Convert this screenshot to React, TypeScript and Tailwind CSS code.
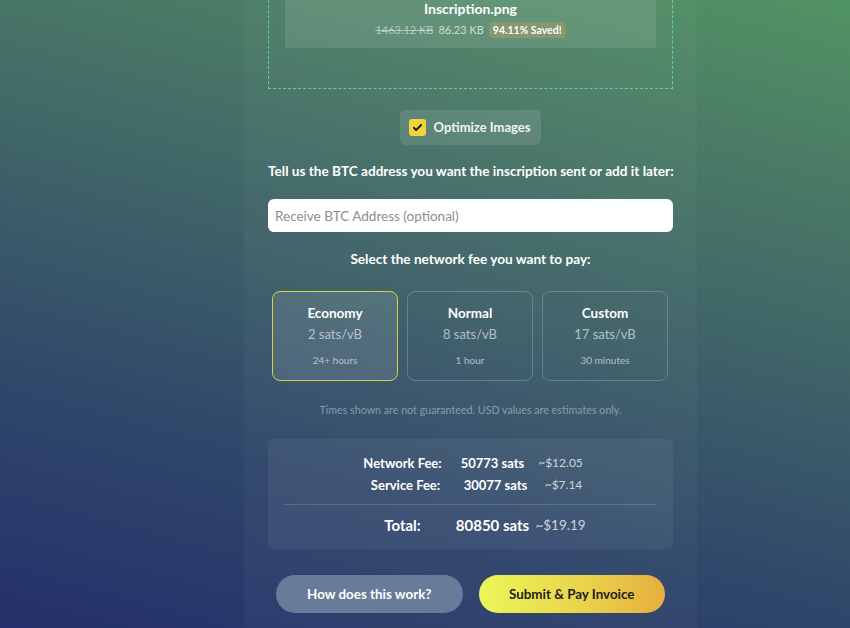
import React from "react";

const font = { fontFamily: "Lato, 'Open Sans', sans-serif" };

function FeeCard({ title, rate, time, active }: { title: string; rate: string; time: string; active?: boolean }) {
  return (
    <div
      className={
        "flex-1 h-[90px] rounded-lg border flex flex-col items-center pt-[12px] " +
        (active ? "border-[#cfd444] bg-white/10" : "border-white/20 bg-transparent")
      }
    >
      <div className="text-[13.5px] leading-[18px] font-bold text-white">{title}</div>
      <div className="mt-[2px] text-[13px] leading-[20px] text-white/60">{rate}</div>
      <div className="mt-[9px] text-[10px] leading-[14px] text-white/60">{time}</div>
    </div>
  );
}

function Row({ label, sats, usd, big, shift }: { label: string; sats: string; usd: string; big?: boolean; shift?: boolean }) {
  return (
    <div
      className={
        "flex justify-center " +
        (shift ? "pl-[6px] " : "") +
        (big ? "text-[15px] leading-[20px]" : "text-[13px] leading-[18px]")
      }
    >
      <div className="w-[100px] text-center font-bold text-white">{label}</div>
      <div className="w-[80px] text-center font-bold text-white">{sats}</div>
      <div className={"w-[56px] text-center text-white/75 " + (big ? "text-[13.5px]" : "text-[12px]")}>{usd}</div>
    </div>
  );
}

export default function App() {
  return (
    <div
      style={font}
      className="w-[850px] h-[628px] overflow-hidden bg-[linear-gradient(195deg,#519363_0%,#4a7a66_22%,#3e6268_45%,#30486a_70%,#24306b_100%)]"
    >
      <div className="flow-root ml-[244px] w-[453px] h-full bg-white/[0.03] px-[24px]">
        {/* upload box */}
        <div className="-mt-[40px] border border-dashed border-[#62cbb8] px-4 pt-4 pb-10">
          <div className="bg-white/10 pt-[22px] pb-[9px] flex flex-col items-center">
            <div className="text-[14px] leading-[20px] font-bold text-white">Inscription.png</div>
            <div className="mt-[2px] flex items-center gap-[5px] text-[11px] leading-[18px]">
              <span className="line-through text-white/50">1463.12 KB</span>
              <span className="text-white/70">86.23 KB</span>
              <span className="rounded-sm bg-[#8f9a6c]/80 px-[4px] text-[10.5px] leading-[16px] font-bold text-white">
                94.11% Saved!
              </span>
            </div>
          </div>
        </div>

        {/* optimize */}
        <div className="mt-[21px] flex justify-center">
          <div className="h-[35px] flex items-center gap-[8px] rounded-md bg-white/10 pl-[9px] pr-[11px]">
            <div className="w-[17px] h-[17px] rounded-[3px] bg-[#f3d33c] flex items-center justify-center">
              <svg width="11" height="11" viewBox="0 0 24 24" fill="none" stroke="#1b1b1b" strokeWidth="4" strokeLinecap="round" strokeLinejoin="round">
                <path d="M4 12.5l5 5L20 6.5" />
              </svg>
            </div>
            <span className="text-[13px] font-bold text-white/90">Optimize Images</span>
          </div>
        </div>

        <div className="mt-[17px] text-center text-[13.6px] leading-[18px] font-bold text-white whitespace-nowrap">
          Tell us the BTC address you want the inscription sent or add it later:
        </div>

        <input
          className="mt-[19px] block w-full h-[33px] rounded-md bg-white px-[7px] text-[13.5px] text-gray-700 placeholder:text-[#8e8e8e] outline-none"
          placeholder="Receive BTC Address (optional)"
        />

        <div className="mt-[18px] text-center text-[13.6px] leading-[18px] font-bold text-white">
          Select the network fee you want to pay:
        </div>

        <div className="mt-[23px] flex gap-[9px] pl-[4px] pr-[5px]">
          <FeeCard title="Economy" rate="2 sats/vB" time="24+ hours" active />
          <FeeCard title="Normal" rate="8 sats/vB" time="1 hour" />
          <FeeCard title="Custom" rate="17 sats/vB" time="30 minutes" />
        </div>

        <div className="mt-[22px] text-center text-[10.7px] leading-[14px] text-white/40">
          Times shown are not guaranteed. USD values are estimates only.
        </div>

        <div className="mt-[22px] h-[110px] rounded-md bg-white/[0.05] px-[16px] pt-[15px]">
          <Row label="Network Fee:" sats="50773 sats" usd="~$12.05" />
          <div className="mt-[4px]">
            <Row label="Service Fee:" sats="30077 sats" usd="~$7.14" shift />
          </div>
          <div className="mt-[10px] h-px bg-white/15" />
          <div className="mt-[10px]">
            <Row label="Total:" sats="80850 sats" usd="~$19.19" big />
          </div>
        </div>

        <div className="mt-[26px] flex gap-[16px] px-[8px]">
          <button className="flex-1 h-[38px] rounded-full bg-[#687b99] text-[13.4px] font-bold text-white">
            How does this work?
          </button>
          <button className="flex-1 h-[38px] rounded-full bg-[linear-gradient(90deg,#eaf75a_0%,#e9d44a_55%,#e6ae3e_100%)] text-[13.4px] font-bold text-[#1e1e1e]">
            Submit &amp; Pay Invoice
          </button>
        </div>
      </div>
    </div>
  );
}
